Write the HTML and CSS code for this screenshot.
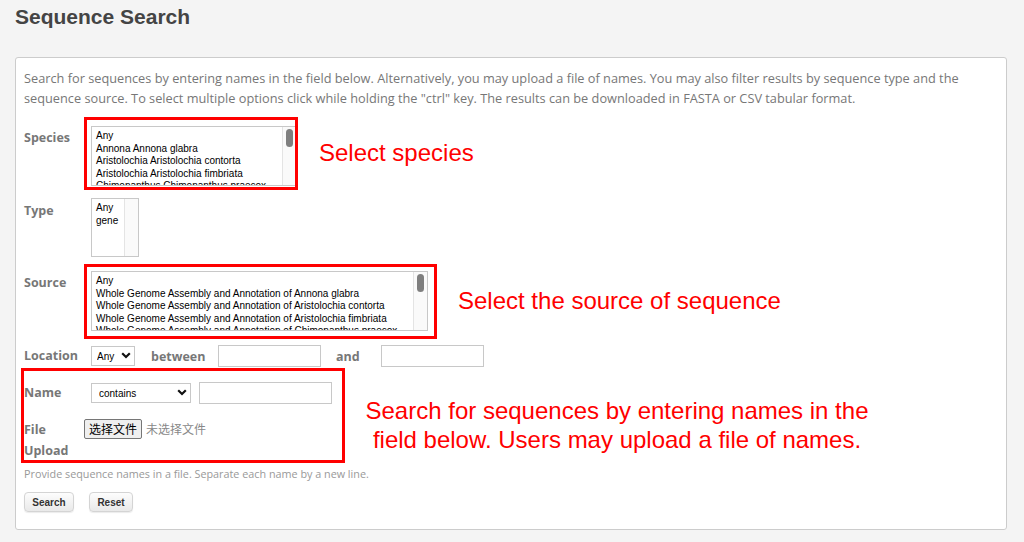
FILE: index.html
```html
<!DOCTYPE html>
<html lang="en">
<head>
    <meta charset="UTF-8">
    <meta name="viewport" content="width=device-width, initial-scale=1.0">
    <title>Sequence Search</title>
    <link rel="stylesheet" href="styles.css">
</head>
<body>
    <h1 class="title">Sequence Search</h1>
    <div class="panel">
        <p class="intro">Search for sequences by entering names in the field below. Alternatively, you may upload a file of names. You may also filter results by sequence type and the sequence source. To select multiple options click while holding the "ctrl" key. The results can be downloaded in FASTA or CSV tabular format.</p>

        <div class="row row-species">
            <label class="lbl">Species</label>
            <div class="multi species" role="listbox">
                <div class="opts">
                    <div>Any</div>
                    <div>Annona Annona glabra</div>
                    <div>Aristolochia Aristolochia contorta</div>
                    <div>Aristolochia Aristolochia fimbriata</div>
                    <div>Chimonanthus Chimonanthus praecox</div>
                </div>
                <div class="track"><div class="thumb"></div></div>
            </div>
        </div>

        <div class="row row-type">
            <label class="lbl">Type</label>
            <div class="multi type" role="listbox">
                <div class="opts">
                    <div>Any</div>
                    <div>gene</div>
                </div>
                <div class="track"></div>
            </div>
        </div>

        <div class="row row-source">
            <label class="lbl">Source</label>
            <div class="multi source" role="listbox">
                <div class="opts">
                    <div>Any</div>
                    <div>Whole Genome Assembly and Annotation of Annona glabra</div>
                    <div>Whole Genome Assembly and Annotation of Aristolochia contorta</div>
                    <div>Whole Genome Assembly and Annotation of Aristolochia fimbriata</div>
                    <div>Whole Genome Assembly and Annotation of Chimonanthus praecox</div>
                </div>
                <div class="track"><div class="thumb"></div></div>
            </div>
        </div>

        <div class="row row-location">
            <label class="lbl">Location</label>
            <span class="drop drop-any">
                <select><option>Any</option></select>
                <svg class="chev" width="10" height="7" viewBox="0 0 10 7"><path d="M1.2 1.2l3.8 3.8 3.8-3.8" fill="none" stroke="#111" stroke-width="2.2"/></svg>
            </span>
            <span class="lbl-inline between">between</span>
            <input class="txt loc" type="text">
            <span class="lbl-inline and">and</span>
            <input class="txt loc" type="text">
        </div>

        <div class="row row-name">
            <label class="lbl">Name</label>
            <span class="drop drop-contains">
                <select><option>contains</option></select>
                <svg class="chev" width="10" height="7" viewBox="0 0 10 7"><path d="M1.2 1.2l3.8 3.8 3.8-3.8" fill="none" stroke="#111" stroke-width="2.2"/></svg>
            </span>
            <input class="txt name" type="text">
        </div>

        <div class="row row-file">
            <label class="lbl lbl-file">File Upload</label>
            <button class="file-btn" type="button">选择文件</button>
            <span class="file-none">未选择文件</span>
        </div>

        <p class="help">Provide sequence names in a file. Separate each name by a new line.</p>

        <div class="actions">
            <button class="btn" type="button">Search</button>
            <button class="btn btn-reset" type="button">Reset</button>
        </div>

        <!-- annotations drawn over the form -->
        <div class="mark mark-species"></div>
        <div class="mark mark-source"></div>
        <div class="mark mark-name"></div>
        <div class="note note-species">Select species</div>
        <div class="note note-source">Select the source of sequence</div>
        <div class="note note-name">Search for sequences by entering names in the<br>field below. Users may upload a file of names.</div>
    </div>
</body>
</html>
```

FILE: styles.css
```css
* {
    margin: 0;
    padding: 0;
    box-sizing: border-box;
}
body {
    background: #f4f4f4;
    font-family: "Open Sans", "Liberation Sans", sans-serif;
    color: #777;
    padding: 0 15px;
}
.title {
    font-family: "Liberation Sans", Arial, sans-serif;
    font-size: 21px;
    font-weight: bold;
    color: #444;
    line-height: 24px;
    padding-top: 5px;
    height: 57px;
}
.panel {
    position: relative;
    width: 992px;
    height: 473px;
    background: #fff;
    border: 1px solid #ccc;
    border-radius: 3px;
    padding: 10px 8px 0;
}
.intro {
    font-size: 12.75px;
    line-height: 20px;
    color: #777;
    margin-bottom: 18px;
}
.row {
    display: flex;
    align-items: flex-start;
}
.lbl {
    width: 67px;
    flex-shrink: 0;
    font-size: 12.5px;
    font-weight: bold;
    line-height: 20px;
    color: #777;
    padding-top: 2px;
}

/* multi-select list boxes */
.multi {
    display: flex;
    font-family: "Liberation Sans", Arial, sans-serif;
    font-size: 10px;
    line-height: 12.6px;
    color: #000;
    border: 1px solid #c8c8c8;
    background: #fff;
}
.opts {
    flex: 1;
    overflow: hidden;
    white-space: nowrap;
    padding: 3px 0 0 4px;
}
.track {
    width: 14px;
    flex-shrink: 0;
    background: #fafafa;
    border-left: 1px solid #e4e4e4;
    padding: 2px 3px 0 3px;
}
.thumb {
    height: 18px;
    background: #7f7f7f;
    border-radius: 4px;
}
.species {
    width: 206px;
    height: 60px;
}
.type {
    width: 48px;
    height: 59px;
}
.source {
    width: 337px;
    height: 60px;
}
.row-type {
    margin-top: 12px;
}
.row-type .lbl {
    padding-top: 3px;
}
.row-source {
    margin-top: 14px;
}
.row-location {
    margin-top: 14px;
    align-items: center;
    height: 22px;
}
.row-location .lbl,
.row-name .lbl {
    padding-top: 0;
}

/* single dropdowns */
.drop {
    position: relative;
    display: block;
    height: 20px;
}
.drop select {
    display: block;
    appearance: none;
    -webkit-appearance: none;
    font-family: "Liberation Sans", Arial, sans-serif;
    font-size: 10px;
    color: #000;
    background: #fff;
    border: 1px solid #c8c8c8;
    border-radius: 0;
    height: 20px;
    padding: 0 0 0 5px;
    outline: none;
}
.chev {
    position: absolute;
    right: 4px;
    top: 6px;
    pointer-events: none;
}
.drop-any select {
    width: 44px;
}
.drop-contains select {
    width: 100px;
    padding-left: 7px;
}
.lbl-inline {
    font-size: 12.5px;
    font-weight: bold;
    color: #777;
}
.between {
    width: 67px;
    margin-left: 16px;
}
.and {
    width: 45px;
    margin-left: 15px;
}
.txt {
    height: 22px;
    border: 1px solid #c8c8c8;
    background: #fff;
    outline: none;
}
.loc {
    width: 103px;
}
.row-name {
    margin-top: 15px;
    align-items: center;
    height: 22px;
}
.name {
    width: 133px;
    margin-left: 8px;
}
.row-file {
    margin-top: 15px;
}
.lbl-file {
    width: 60px;
    line-height: 21px;
    padding-top: 0;
}
.file-btn {
    font-family: "Noto Sans CJK SC", sans-serif;
    font-size: 12px;
    color: #000;
    height: 20px;
    width: 58px;
    background: #efefef;
    border: 1px solid #767676;
    border-radius: 2px;
    line-height: 16px;
}
.file-none {
    font-family: "Noto Sans CJK SC", sans-serif;
    font-size: 12px;
    color: #888;
    margin-left: 4px;
    line-height: 20px;
}
.help {
    font-size: 10.8px;
    line-height: 16px;
    color: #999;
    margin-top: 5px;
}
.actions {
    display: flex;
    gap: 15px;
    margin-top: 10px;
}
.btn {
    font-family: "Liberation Sans", Arial, sans-serif;
    font-size: 10px;
    font-weight: bold;
    color: #333;
    height: 20px;
    width: 50px;
    border: 1px solid #d4d4d4;
    border-radius: 4px;
    background: linear-gradient(#fdfdfd, #e9e9e9);
    box-shadow: 0 1px 1px rgba(0, 0, 0, 0.08);
}
.btn-reset {
    width: 44px;
}

/* red annotation marks */
.mark {
    position: absolute;
    border: 3px solid #f00;
}
.mark-species {
    left: 68px;
    top: 59px;
    width: 214px;
    height: 73px;
}
.mark-source {
    left: 68px;
    top: 206px;
    width: 353px;
    height: 75px;
}
.mark-name {
    left: 5px;
    top: 310px;
    width: 324px;
    height: 95px;
}
.note {
    position: absolute;
    font-family: "Liberation Sans", Arial, sans-serif;
    font-size: 24px;
    line-height: 28px;
    color: #f00;
    white-space: nowrap;
}
.note-species {
    left: 303px;
    top: 81px;
}
.note-source {
    left: 442px;
    top: 229px;
}
.note-name {
    left: 331px;
    top: 338px;
    width: 540px;
    line-height: 29px;
    text-align: center;
}
```
